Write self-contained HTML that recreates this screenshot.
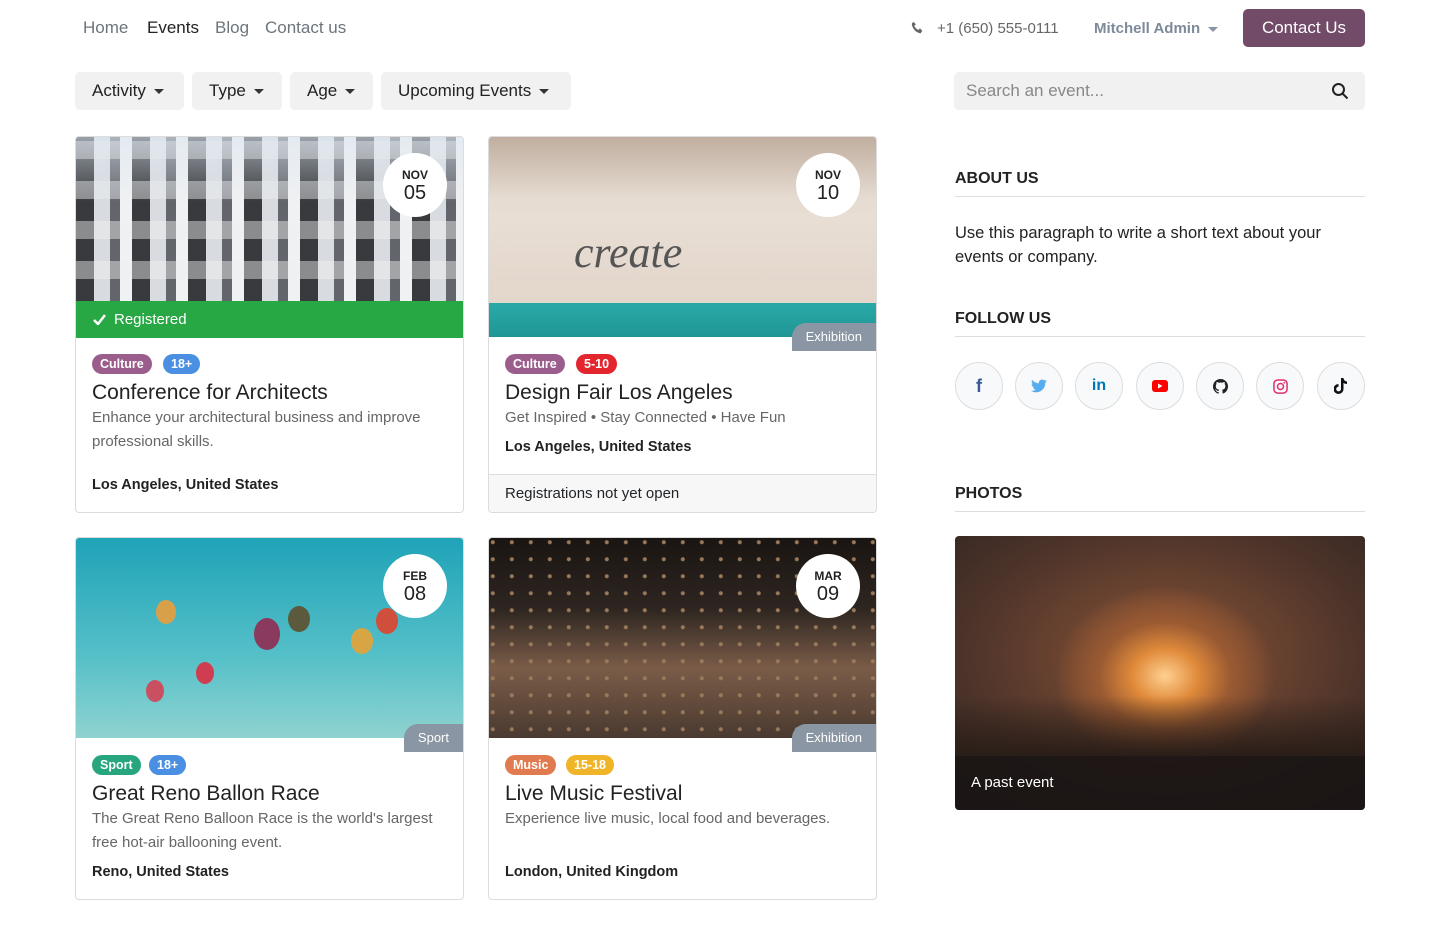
<!DOCTYPE html>
<html><head><meta charset="utf-8"><style>
*{box-sizing:border-box;margin:0;padding:0}
body{width:1440px;height:930px;background:#fff;font-family:"Liberation Sans",sans-serif;color:#212529;position:relative;overflow:hidden}
.a{position:absolute}
.nav{top:18px;font-size:17px;color:#6c757d}
.btnf{top:72px;height:38px;background:#f1f1f1;border-radius:5px;font-size:17px;color:#222;line-height:38px;padding-left:17px}
.car{display:inline-block;width:0;height:0;border-left:5px solid transparent;border-right:5px solid transparent;border-top:5px solid #333;vertical-align:middle;margin-left:8px}
.card{border:1px solid #dcdcdc;border-radius:4px;overflow:hidden;background:#fff}
.date{width:64px;height:64px;border-radius:50%;background:#fff;text-align:center;font-size:12px;font-weight:bold;line-height:1;padding-top:16px;color:#222}
.date b{display:block;font-weight:normal;font-size:20px;margin-top:2px}
.badge{top:0;height:20px;border-radius:10px;color:#fff;font-size:12.5px;font-weight:bold;line-height:20px;padding:0 8px}
.title{font-size:21px;color:#222}
.desc{font-size:15px;color:#666;line-height:24px}
.loc{font-size:14.5px;font-weight:bold;color:#222}
.tag{height:28px;background:#8a96a3;color:#fff;font-size:13px;line-height:28px;padding:0 14px;border-radius:14px 0 0 0}
.h{font-size:16px;font-weight:bold;color:#222;left:955px}
.hr{left:955px;width:410px;height:1px;background:#ddd}
.soc{top:362px;width:48px;height:48px;border-radius:50%;border:1px solid #ddd;background:#f8f9fa;display:flex;align-items:center;justify-content:center}
</style></head><body>
<div class="a nav" style="left:83px">Home</div>
<div class="a nav" style="left:147px;color:#222">Events</div>
<div class="a nav" style="left:215px">Blog</div>
<div class="a nav" style="left:265px">Contact us</div>
<svg class="a" style="left:911px;top:21px" width="13" height="13" viewBox="0 0 16 16"><path fill="#666" d="M3 1l3 3-2 2c1 2 3 4 5 5l2-2 3 3-2 3C7 15 1 9 1 3z"/></svg>
<div class="a" style="left:937px;top:20px;font-size:15px;color:#666">+1 (650) 555-0111</div>
<div class="a" style="left:1094px;top:20px;font-size:15px;color:#7d8a99;font-weight:bold">Mitchell Admin<span class="car" style="border-top-color:#8a96a3"></span></div>
<div class="a" style="left:1243px;top:9px;width:122px;height:38px;background:#714b67;border-radius:5px;color:#fff;font-size:17px;text-align:center;line-height:38px">Contact Us</div>

<div class="a btnf" style="left:75px;width:109px">Activity<span class="car"></span></div>
<div class="a btnf" style="left:192px;width:90px">Type<span class="car"></span></div>
<div class="a btnf" style="left:290px;width:83px">Age<span class="car"></span></div>
<div class="a btnf" style="left:381px;width:190px">Upcoming Events<span class="car"></span></div>
<div class="a btnf" style="left:954px;width:411px;color:#888;padding-left:12px">Search an event...</div>
<svg class="a" style="left:1331px;top:82px" width="18" height="18" viewBox="0 0 18 18"><circle cx="7.5" cy="7.5" r="5.5" fill="none" stroke="#222" stroke-width="2"/><path d="M11.5 11.5l5 5" stroke="#222" stroke-width="2"/></svg>

<!-- card1 -->
<div class="a card" style="left:75px;top:136px;width:389px;height:377px">
<div class="a" style="left:0;top:0;width:389px;height:164px;background:repeating-linear-gradient(90deg,#2d2f33 0 18px,#d6dade 18px 34px,#5a5e64 34px 44px,#eef0f2 44px 56px);opacity:.95"></div>
<div class="a" style="left:0;top:0;width:389px;height:164px;background:linear-gradient(180deg,rgba(220,230,240,.6),rgba(220,230,240,0) 40%),repeating-linear-gradient(0deg,transparent 0 22px,rgba(240,240,240,.45) 22px 40px)"></div>
<div class="a" style="left:0;top:164px;width:389px;height:37px;background:#28a745;color:#fff;font-size:15px;line-height:37px;padding-left:38px">Registered</div>
<svg class="a" style="left:17px;top:177px" width="13" height="11" viewBox="0 0 13 11"><path d="M1 6l4 4 7-9" stroke="#fff" stroke-width="2.5" fill="none"/></svg>
<div class="a date" style="left:307px;top:16px">NOV<b>05</b></div>
<div class="a" style="left:16px;top:217px;height:19px;width:300px">
<span class="a badge" style="left:0;background:#9b5e8c">Culture</span><span class="a badge" style="left:71px;background:#4a8fe2">18+</span></div>
<div class="a title" style="left:16px;top:244px">Conference for Architects</div>
<div class="a desc" style="left:16px;top:269px;width:360px">Enhance your architectural business and improve professional skills.</div>
<div class="a loc" style="left:16px;top:340px">Los Angeles, United States</div>
</div>

<!-- card2 -->
<div class="a card" style="left:488px;top:136px;width:389px;height:377px">
<div class="a" style="left:0;top:0;width:389px;height:200px;background:linear-gradient(180deg,#ddd2c6 0%,#e8ded4 40%,#e3d6cb 83%,#2aa9a8 83%,#1f9695 100%)"></div>
<div class="a" style="left:0;top:0;width:389px;height:60px;background:linear-gradient(180deg,rgba(140,110,90,.35),transparent)"></div>
<div class="a" style="left:85px;top:90px;font-family:'Liberation Serif',serif;font-style:italic;font-size:44px;color:#555">create</div>
<div class="a tag" style="right:0;top:186px">Exhibition</div>
<div class="a date" style="left:307px;top:16px">NOV<b>10</b></div>
<div class="a" style="left:16px;top:217px;height:19px;width:300px">
<span class="a badge" style="left:0;background:#9b5e8c">Culture</span><span class="a badge" style="left:71px;background:#e3262d">5-10</span></div>
<div class="a title" style="left:16px;top:244px">Design Fair Los Angeles</div>
<div class="a desc" style="left:16px;top:269px">Get Inspired • Stay Connected • Have Fun</div>
<div class="a loc" style="left:16px;top:302px">Los Angeles, United States</div>
<div class="a" style="left:0;top:337px;width:389px;height:40px;background:#f7f7f7;border-top:1px solid #ddd;font-size:15px;line-height:38px;padding-left:16px">Registrations not yet open</div>
</div>

<!-- card3 -->
<div class="a card" style="left:75px;top:537px;width:389px;height:363px">
<div class="a" style="left:0;top:0;width:389px;height:200px;background:linear-gradient(180deg,#1fa3b8,#56c0c8 60%,#8fd3d0)"></div>
<div class="a" style="left:80px;top:62px;width:20px;height:24px;border-radius:50%;background:#d9a04a"></div>
<div class="a" style="left:178px;top:80px;width:26px;height:32px;border-radius:50%;background:#8a3a5c"></div>
<div class="a" style="left:212px;top:68px;width:22px;height:26px;border-radius:50%;background:#5b5a3c"></div>
<div class="a" style="left:275px;top:90px;width:22px;height:26px;border-radius:50%;background:#d8a545"></div>
<div class="a" style="left:300px;top:70px;width:22px;height:26px;border-radius:50%;background:#d04f3c"></div>
<div class="a" style="left:70px;top:142px;width:18px;height:22px;border-radius:50%;background:#c85060"></div>
<div class="a" style="left:120px;top:124px;width:18px;height:22px;border-radius:50%;background:#d03c50"></div>
<div class="a tag" style="right:0;top:186px">Sport</div>
<div class="a date" style="left:307px;top:16px">FEB<b>08</b></div>
<div class="a" style="left:16px;top:217px;height:19px;width:300px">
<span class="a badge" style="left:0;background:#26a57e">Sport</span><span class="a badge" style="left:57px;background:#4a8fe2">18+</span></div>
<div class="a title" style="left:16px;top:244px">Great Reno Ballon Race</div>
<div class="a desc" style="left:16px;top:269px;width:365px">The Great Reno Balloon Race is the world's largest free hot-air ballooning event.</div>
<div class="a loc" style="left:16px;top:326px">Reno, United States</div>
</div>

<!-- card4 -->
<div class="a card" style="left:488px;top:537px;width:389px;height:363px">
<div class="a" style="left:0;top:0;width:389px;height:200px;background:radial-gradient(circle at 20% 25%,#9a7a5a 0 1.5px,transparent 2.5px) 0 0/19px 17px,linear-gradient(180deg,#1a1512 0%,#2d2520 35%,#7a5c48 65%,#4a3a30 100%)"></div>
<div class="a tag" style="right:0;top:186px">Exhibition</div>
<div class="a date" style="left:307px;top:16px">MAR<b>09</b></div>
<div class="a" style="left:16px;top:217px;height:19px;width:300px">
<span class="a badge" style="left:0;background:#e07b4f">Music</span><span class="a badge" style="left:61px;background:#f0b429">15-18</span></div>
<div class="a title" style="left:16px;top:244px">Live Music Festival</div>
<div class="a desc" style="left:16px;top:269px">Experience live music, local food and beverages.</div>
<div class="a loc" style="left:16px;top:326px">London, United Kingdom</div>
</div>

<!-- sidebar -->
<div class="a h" style="top:170px">ABOUT US</div>
<div class="a hr" style="top:196px"></div>
<div class="a" style="left:955px;top:221px;width:410px;font-size:16.5px;line-height:24px;color:#222">Use this paragraph to write a short text about your events or company.</div>
<div class="a h" style="top:310px">FOLLOW US</div>
<div class="a hr" style="top:336px"></div>
<div class="a soc" style="left:955px"><span style="color:#3b5998;font-weight:bold;font-size:18px">f</span></div>
<div class="a soc" style="left:1015px"><svg width="16" height="14" viewBox="0 0 24 20"><path fill="#55acee" d="M24 2.4a10 10 0 0 1-2.8.8A5 5 0 0 0 23.3.5a10 10 0 0 1-3.1 1.2A5 5 0 0 0 11.8 6 14 14 0 0 1 1.7.9a5 5 0 0 0 1.5 6.6A5 5 0 0 1 1 6.9a5 5 0 0 0 3.9 4.9 5 5 0 0 1-2.2.1 5 5 0 0 0 4.6 3.4A10 10 0 0 1 0 17.3 14 14 0 0 0 7.5 19.5c9 0 14-7.5 14-14v-.6A10 10 0 0 0 24 2.4z"/></svg></div>
<div class="a soc" style="left:1075px"><span style="color:#0077b5;font-weight:bold;font-size:16px">in</span></div>
<div class="a soc" style="left:1136px"><svg width="16" height="12" viewBox="0 0 16 12"><rect width="16" height="12" rx="3" fill="#f00"/><path d="M6 3.5v5l4.5-2.5z" fill="#fff"/></svg></div>
<div class="a soc" style="left:1196px"><svg width="15" height="15" viewBox="0 0 16 16"><path fill="#222" d="M8 0a8 8 0 0 0-2.5 15.6c.4 0 .5-.2.5-.4v-1.5c-2.2.5-2.7-1-2.7-1-.4-.9-.9-1.2-.9-1.2-.7-.5.1-.5.1-.5.8.1 1.2.8 1.2.8.7 1.300 1.900.900 2.400.700 0-.5.300-.900.500-1.100-1.800-.200-3.600-.900-3.600-4 0-.900.300-1.600.800-2.100-.100-.200-.400-1 .100-2.100 0 0 .700-.200 2.200.800a7.600 7.600 0 0 1 4 0c1.500-1 2.200-.800 2.200-.800.400 1.100.200 1.900.100 2.100.500.600.800 1.300.800 2.100 0 3.100-1.900 3.800-3.600 4 .300.300.600.800.600 1.500v2.200c0 .200.100.500.600.400A8 8 0 0 0 8 0z"/></svg></div>
<div class="a soc" style="left:1256px"><svg width="15" height="15" viewBox="0 0 16 16"><rect x="1" y="1" width="14" height="14" rx="4" fill="none" stroke="#e1306c" stroke-width="1.6"/><circle cx="8" cy="8" r="3.2" fill="none" stroke="#e1306c" stroke-width="1.6"/><circle cx="12" cy="4" r=".9" fill="#e1306c"/></svg></div>
<div class="a soc" style="left:1317px"><svg width="14" height="16" viewBox="0 0 14 16"><path fill="#111" d="M7 0h2.5c.2 2 1.6 3.4 3.5 3.5V6c-1.3 0-2.5-.4-3.5-1.1V11a5 5 0 1 1-5-5v2.6A2.4 2.4 0 1 0 7 11z"/></svg></div>
<div class="a h" style="top:485px">PHOTOS</div>
<div class="a hr" style="top:511px"></div>
<div class="a" style="left:955px;top:536px;width:410px;height:274px;border-radius:4px;overflow:hidden;background:radial-gradient(ellipse 110px 90px at 210px 140px,#ffd090 0%,#e08a3a 30%,#9a5a32 60%,transparent 100%),radial-gradient(ellipse 280px 180px at 210px 120px,#8a5436,#4e342a 70%,#3a2a24)">
<div class="a" style="left:0;top:160px;width:410px;height:60px;background:linear-gradient(180deg,transparent,#2a1e18)"></div>
<div class="a" style="left:0;top:220px;width:410px;height:54px;background:rgba(24,20,20,.9);color:#fff;font-size:15px;line-height:54px;padding-left:16px">A past event</div>
</div>
</body></html>
